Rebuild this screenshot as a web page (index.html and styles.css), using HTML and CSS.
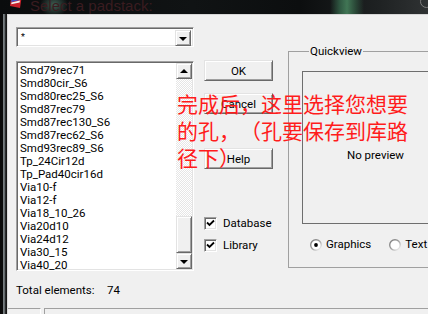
FILE: index.html
```html
<!DOCTYPE html>
<html>
<head>
<meta charset="utf-8">
<link rel="stylesheet" href="styles.css">
</head>
<body>
<div class="titlebar">
  <svg class="appicon" width="14" height="14" viewBox="0 0 14 14">
    <path d="M1 2 L12 0 L10 13 L0 11 Z" fill="#c8202a"/>
    <path d="M2 4 L11 2 L10 5 L1 7 Z" fill="#3a52c8"/>
    <path d="M1.5 7.5 L10 5.5 L9.6 7.5 L1.2 9.3 Z" fill="#f4f4f4"/>
  </svg>
  <span class="title">Select a padstack:</span>
  <span class="corner"></span>
</div>
<div class="frame-body">
  <div class="frame-left"></div>
  <div class="client">
    <div class="content">
      <div class="leftcol">
        <div class="combo">
          <span class="combo-text">*</span>
          <span class="sb-btn"><i class="arrow-down"></i></span>
        </div>
        <div class="list">
          <ul class="items">
            <li>Smd79rec71</li>
            <li>Smd80cir_S6</li>
            <li>Smd80rec25_S6</li>
            <li>Smd87rec79</li>
            <li>Smd87rec130_S6</li>
            <li>Smd87rec62_S6</li>
            <li>Smd93rec89_S6</li>
            <li>Tp_24Cir12d</li>
            <li>Tp_Pad40cir16d</li>
            <li>Via10-f</li>
            <li>Via12-f</li>
            <li>Via18_10_26</li>
            <li>Via20d10</li>
            <li>Via24d12</li>
            <li>Via30_15</li>
            <li>Via40_20</li>
          </ul>
          <div class="vscroll">
            <span class="sb-btn"><i class="arrow-up"></i></span>
            <span class="track"></span>
            <span class="thumb"></span>
            <span class="sb-btn"><i class="arrow-down"></i></span>
          </div>
        </div>
        <div class="total"><span class="total-label">Total elements:</span><span>74</span></div>
      </div>
      <div class="btncol">
        <button class="btn btn-ok">OK</button>
        <button class="btn btn-cancel">Cancel</button>
        <button class="btn btn-help">Help</button>
        <div class="check check-db">
          <span class="checkbox"><svg width="9" height="9" viewBox="0 0 9 9"><path d="M1 3.5 L3.5 6 L8 1.5" fill="none" stroke="#000" stroke-width="1.8"/></svg></span>
          <span>Database</span>
        </div>
        <div class="check check-lib">
          <span class="checkbox"><svg width="9" height="9" viewBox="0 0 9 9"><path d="M1 3.5 L3.5 6 L8 1.5" fill="none" stroke="#000" stroke-width="1.8"/></svg></span>
          <span>Library</span>
        </div>
      </div>
      <fieldset class="group">
        <legend class="legend">Quickview</legend>
        <div class="preview">No preview</div>
        <div class="radios">
          <div class="radio">
            <svg width="12" height="12" viewBox="0 0 12 12">
              <defs><linearGradient id="rg" x1="0" y1="0" x2="1" y2="1"><stop offset="0" stop-color="#7a7a7a"/><stop offset="0.5" stop-color="#a0a0a0"/><stop offset="1" stop-color="#ffffff"/></linearGradient></defs>
              <circle cx="6" cy="6" r="5.3" fill="#fff" stroke="url(#rg)" stroke-width="1.4"/>
              <circle cx="6" cy="6" r="1.9" fill="#000"/>
            </svg>
            <span>Graphics</span>
          </div>
          <div class="radio radio-text">
            <svg width="12" height="12" viewBox="0 0 12 12">
              <circle cx="6" cy="6" r="5.3" fill="#fff" stroke="url(#rg)" stroke-width="1.4"/>
            </svg>
            <span>Text</span>
          </div>
        </div>
      </fieldset>
    </div>
    <div class="statusbar"><span class="pane pane-1"></span><span class="pane pane-2"></span></div>
  </div>
</div>
<div class="note">完成后，这里选择您想要<br>的孔，（孔要保存到库路<br>径下）</div>
</body>
</html>
```
FILE: styles.css
```css
* { box-sizing: border-box; margin: 0; padding: 0; }
html, body { width: 428px; height: 314px; overflow: hidden; }
body {
  position: relative;
  background: #f0f0f0;
  font-family: Roboto, "Liberation Sans", Arial, sans-serif;
  font-size: 11.5px;
  color: #000;
}

/* title bar */
.titlebar {
  position: relative;
  height: 14px;
  display: flex;
  align-items: flex-start;
  padding-left: 10px;
  overflow: hidden;
  background:
    radial-gradient(ellipse 14px 12px at 54px 5px, rgba(80,120,105,0.75), rgba(80,120,105,0) 100%),
    linear-gradient(90deg, rgba(0,0,0,0) 330px, rgba(50,95,70,0.9) 340px, rgba(65,118,85,1) 347px, rgba(45,80,60,0.8) 356px, rgba(0,0,0,0) 364px),
    linear-gradient(90deg, #0a0c0d 0, #101314 45%, #0c0e0f 70%, #1e2122 88%, #2f3233 100%);
}
.appicon { margin-top: -5px; flex: none; }
.title {
  margin-left: 6px;
  margin-top: -2px;
  font-family: "Liberation Sans", Arial, sans-serif;
  font-size: 15px;
  line-height: 16px;
  color: #3a1c20;
}
.corner {
  position: absolute;
  left: 420px;
  top: -5px;
  width: 13px;
  height: 13px;
  border-radius: 50%;
  border: 1px solid #7c7c7c;
}

/* frame */
.frame-body { display: flex; height: 300px; }
.frame-left {
  width: 7px;
  flex: none;
  background: linear-gradient(90deg, #0a0a0a 0 3px, #5d6365 3px, #8d9598 4px, #3c4042 5px, #151515 6px 7px);
}
.client {
  flex: 1;
  display: flex;
  flex-direction: column;
  overflow: hidden;
  border-top: 1px solid #d6d6d6;
  border-left: 1px solid #dcdcdc;
}
.content {
  height: 293px;
  flex: none;
  display: flex;
  padding-left: 8px;
}

/* sunken / raised */
.combo, .list {
  background: #fff;
  border: 1px solid;
  border-color: #a0a0a0 #ffffff #ffffff #a0a0a0;
  box-shadow: inset 1px 1px #696969, inset -1px -1px #e3e3e3;
  padding: 1px;
}
.sb-btn, .btn, .thumb {
  background: #f0f0f0;
  border: 1px solid;
  border-color: #e3e3e3 #696969 #696969 #e3e3e3;
  box-shadow: inset 1px 1px #ffffff, inset -1px -1px #a0a0a0;
}

/* left column */
.leftcol { width: 178px; flex: none; }
.combo {
  margin-top: 12px;
  height: 20px;
  display: flex;
  align-items: stretch;
  padding: 2px;
}
.combo-text {
  flex: 1;
  font-size: 9px;
  line-height: 12px;
  padding-left: 2px;
  padding-top: 1px;
}
.sb-btn {
  width: 16px;
  height: 16px;
  flex: none;
  display: flex;
  align-items: center;
  justify-content: center;
}
.arrow-down, .arrow-up { display: block; width: 0; height: 0; border-left: 4px solid transparent; border-right: 4px solid transparent; }
.arrow-down { border-top: 4px solid #000; margin-top: 1px; }
.arrow-up { border-bottom: 4px solid #000; margin-top: -1px; }

.list {
  margin-top: 14px;
  height: 210px;
  display: flex;
  overflow: hidden;
}
.items {
  list-style: none;
  flex: 1;
  padding-top: 1px;
}
.items li {
  height: 13px;
  line-height: 13px;
  padding-left: 2px;
  white-space: nowrap;
}
.vscroll {
  width: 16px;
  flex: none;
  display: flex;
  flex-direction: column;
}
.track {
  flex: 1;
  background: repeating-conic-gradient(#ffffff 0 25%, #e6e6e6 0 50%) 0 0 / 2px 2px;
}
.thumb { height: 37px; flex: none; }

.total {
  margin-top: 13px;
  display: flex;
  line-height: 13px;
  white-space: nowrap;
}
.total-label { width: 91px; flex: none; }

/* buttons column */
.btncol {
  width: 69px;
  flex: none;
  margin-left: 10px;
  display: flex;
  flex-direction: column;
}
.btn {
  height: 21px;
  font-family: inherit;
  font-size: 11.5px;
  color: #000;
  text-align: center;
  line-height: 18px;
}
.btn-ok { margin-top: 45px; }
.btn-cancel { margin-top: 12px; }
.btn-help { margin-top: 34px; }
.check {
  display: flex;
  align-items: center;
  gap: 6px;
  height: 13px;
  line-height: 13px;
}
.check-db { margin-top: 48px; }
.check-lib { margin-top: 9px; }
.checkbox {
  width: 13px;
  height: 13px;
  flex: none;
  background: #fff;
  border: 1px solid;
  border-color: #a0a0a0 #ffffff #ffffff #a0a0a0;
  box-shadow: inset 1px 1px #696969, inset -1px -1px #e3e3e3;
  display: flex;
  align-items: center;
  justify-content: center;
}
.checkbox svg { display: block; }

/* quickview group */
.group {
  margin-left: 15px;
  margin-top: 30px;
  width: 172px;
  height: 223px;
  flex: none;
  border: 1px solid #a0a0a0;
  padding: 0 13px;
  min-width: 0;
}
.legend {
  margin-left: 7px;
  padding: 0 1px;
  line-height: 13px;
}
.preview {
  margin-top: 13px;
  width: 146px;
  height: 153px;
  border: 1px solid #6e6e6e;
  padding-top: 77px;
  padding-left: 44px;
  line-height: 13px;
  white-space: nowrap;
}
.radios {
  margin-top: 14px;
  display: flex;
  align-items: center;
  height: 13px;
  padding-left: 8px;
  white-space: nowrap;
}
.radio {
  display: flex;
  align-items: center;
  gap: 4px;
  line-height: 13px;
}
.radio svg { display: block; flex: none; }
.radio-text { margin-left: 18px; }

/* status bar */
.statusbar {
  height: 10px;
  flex: none;
  display: flex;
}
.pane { height: 10px; border-top: 1px solid #a0a0a0; }
.pane-1 { width: 33px; border-right: 1px solid #ffffff; }
.pane-2 { flex: 1; margin-left: 3px; border-left: 1px solid #a0a0a0; }

/* red annotation overlaid on the screenshot */
.note {
  position: absolute;
  left: 177px;
  top: 90px;
  font-family: "Noto Sans CJK SC", sans-serif;
  font-size: 21px;
  line-height: 27px;
  color: #ff1c1c;
  white-space: nowrap;
  text-spacing-trim: space-all;
}
```
